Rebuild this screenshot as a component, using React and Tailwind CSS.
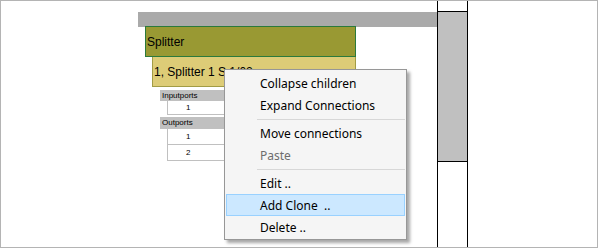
import React from "react";

const menuFont = { fontFamily: '"Noto Sans", "Open Sans", sans-serif' };

function MenuItem({ children, disabled, active }) {
  return (
    <div
      className={
        "h-[22px] mx-px flex items-center pt-[2px] pl-[33px] text-[12px] leading-none border " +
        (active ? "bg-[#cce8ff] border-[#99d1ff]" : "border-transparent") +
        (disabled ? " text-[#6d6d6d]" : " text-black")
      }
    >
      {children}
    </div>
  );
}

function Sep() {
  return (
    <div className="h-[6px] flex items-center pl-[32px] pr-px">
      <div className="h-px w-full bg-[#d7d7d7]" />
    </div>
  );
}

export default function App() {
  return (
    <div className="relative w-[598px] h-[248px] border border-[#b4b4b4] bg-white flex overflow-hidden font-['Liberation_Sans',Arial,sans-serif]">
      {/* canvas */}
      <div className="w-[436px] pt-[11px]">
        <div className="ml-[137px] h-[15px] bg-[#aaaaaa]" />
        <div className="ml-[144px] -mt-px w-[211px] h-[31px] border border-[#2b7a3c] bg-[#999933] flex items-center pl-px text-[12px] text-black">
          Splitter
        </div>
        <div className="ml-[151px] w-[204px] h-[30px] border border-t-0 border-[#a29c45] bg-[#ddcc77] flex items-center pl-px text-[12px] text-black">
          1, Splitter 1 S 1/02
        </div>
        <div className="ml-[159px] mt-[3px] w-[90px] text-[8px] leading-none text-black">
          <div className="h-[11px] bg-[#c0c0c0] flex items-center pl-[2px]">Inputports</div>
          <div className="ml-[7px] h-[14px] border-l border-b border-[#c0c0c0] flex items-center pl-[18px]">1</div>
          <div className="h-[2px]" />
          <div className="h-[12px] bg-[#c0c0c0] flex items-center pl-[2px]">Outports</div>
          <div className="ml-[7px] h-[16px] border-l border-b border-[#c0c0c0] flex items-center pl-[18px]">1</div>
          <div className="ml-[7px] h-[16px] border-l border-b border-[#c0c0c0] flex items-center pl-[18px]">2</div>
        </div>
      </div>

      {/* column */}
      <div className="w-[31px] h-full border-x border-black pt-[10px]">
        <div className="h-[151px] bg-[#c0c0c0] border-y border-black" />
      </div>

      <div className="flex-1" />

      {/* context menu */}
      <div
        className="absolute left-[223px] top-[68px] w-[183px] h-[171px] bg-[#f5f5f5] border border-[#979797] py-[2px] shadow-[3px_3px_3px_rgba(0,0,0,0.35)]"
        style={menuFont}
      >
        <MenuItem>Collapse children</MenuItem>
        <MenuItem>Expand Connections</MenuItem>
        <Sep />
        <MenuItem>Move connections</MenuItem>
        <MenuItem disabled>Paste</MenuItem>
        <Sep />
        <MenuItem>Edit ..</MenuItem>
        <MenuItem active>Add Clone&nbsp;&nbsp;..</MenuItem>
        <MenuItem>Delete ..</MenuItem>
      </div>
    </div>
  );
}
